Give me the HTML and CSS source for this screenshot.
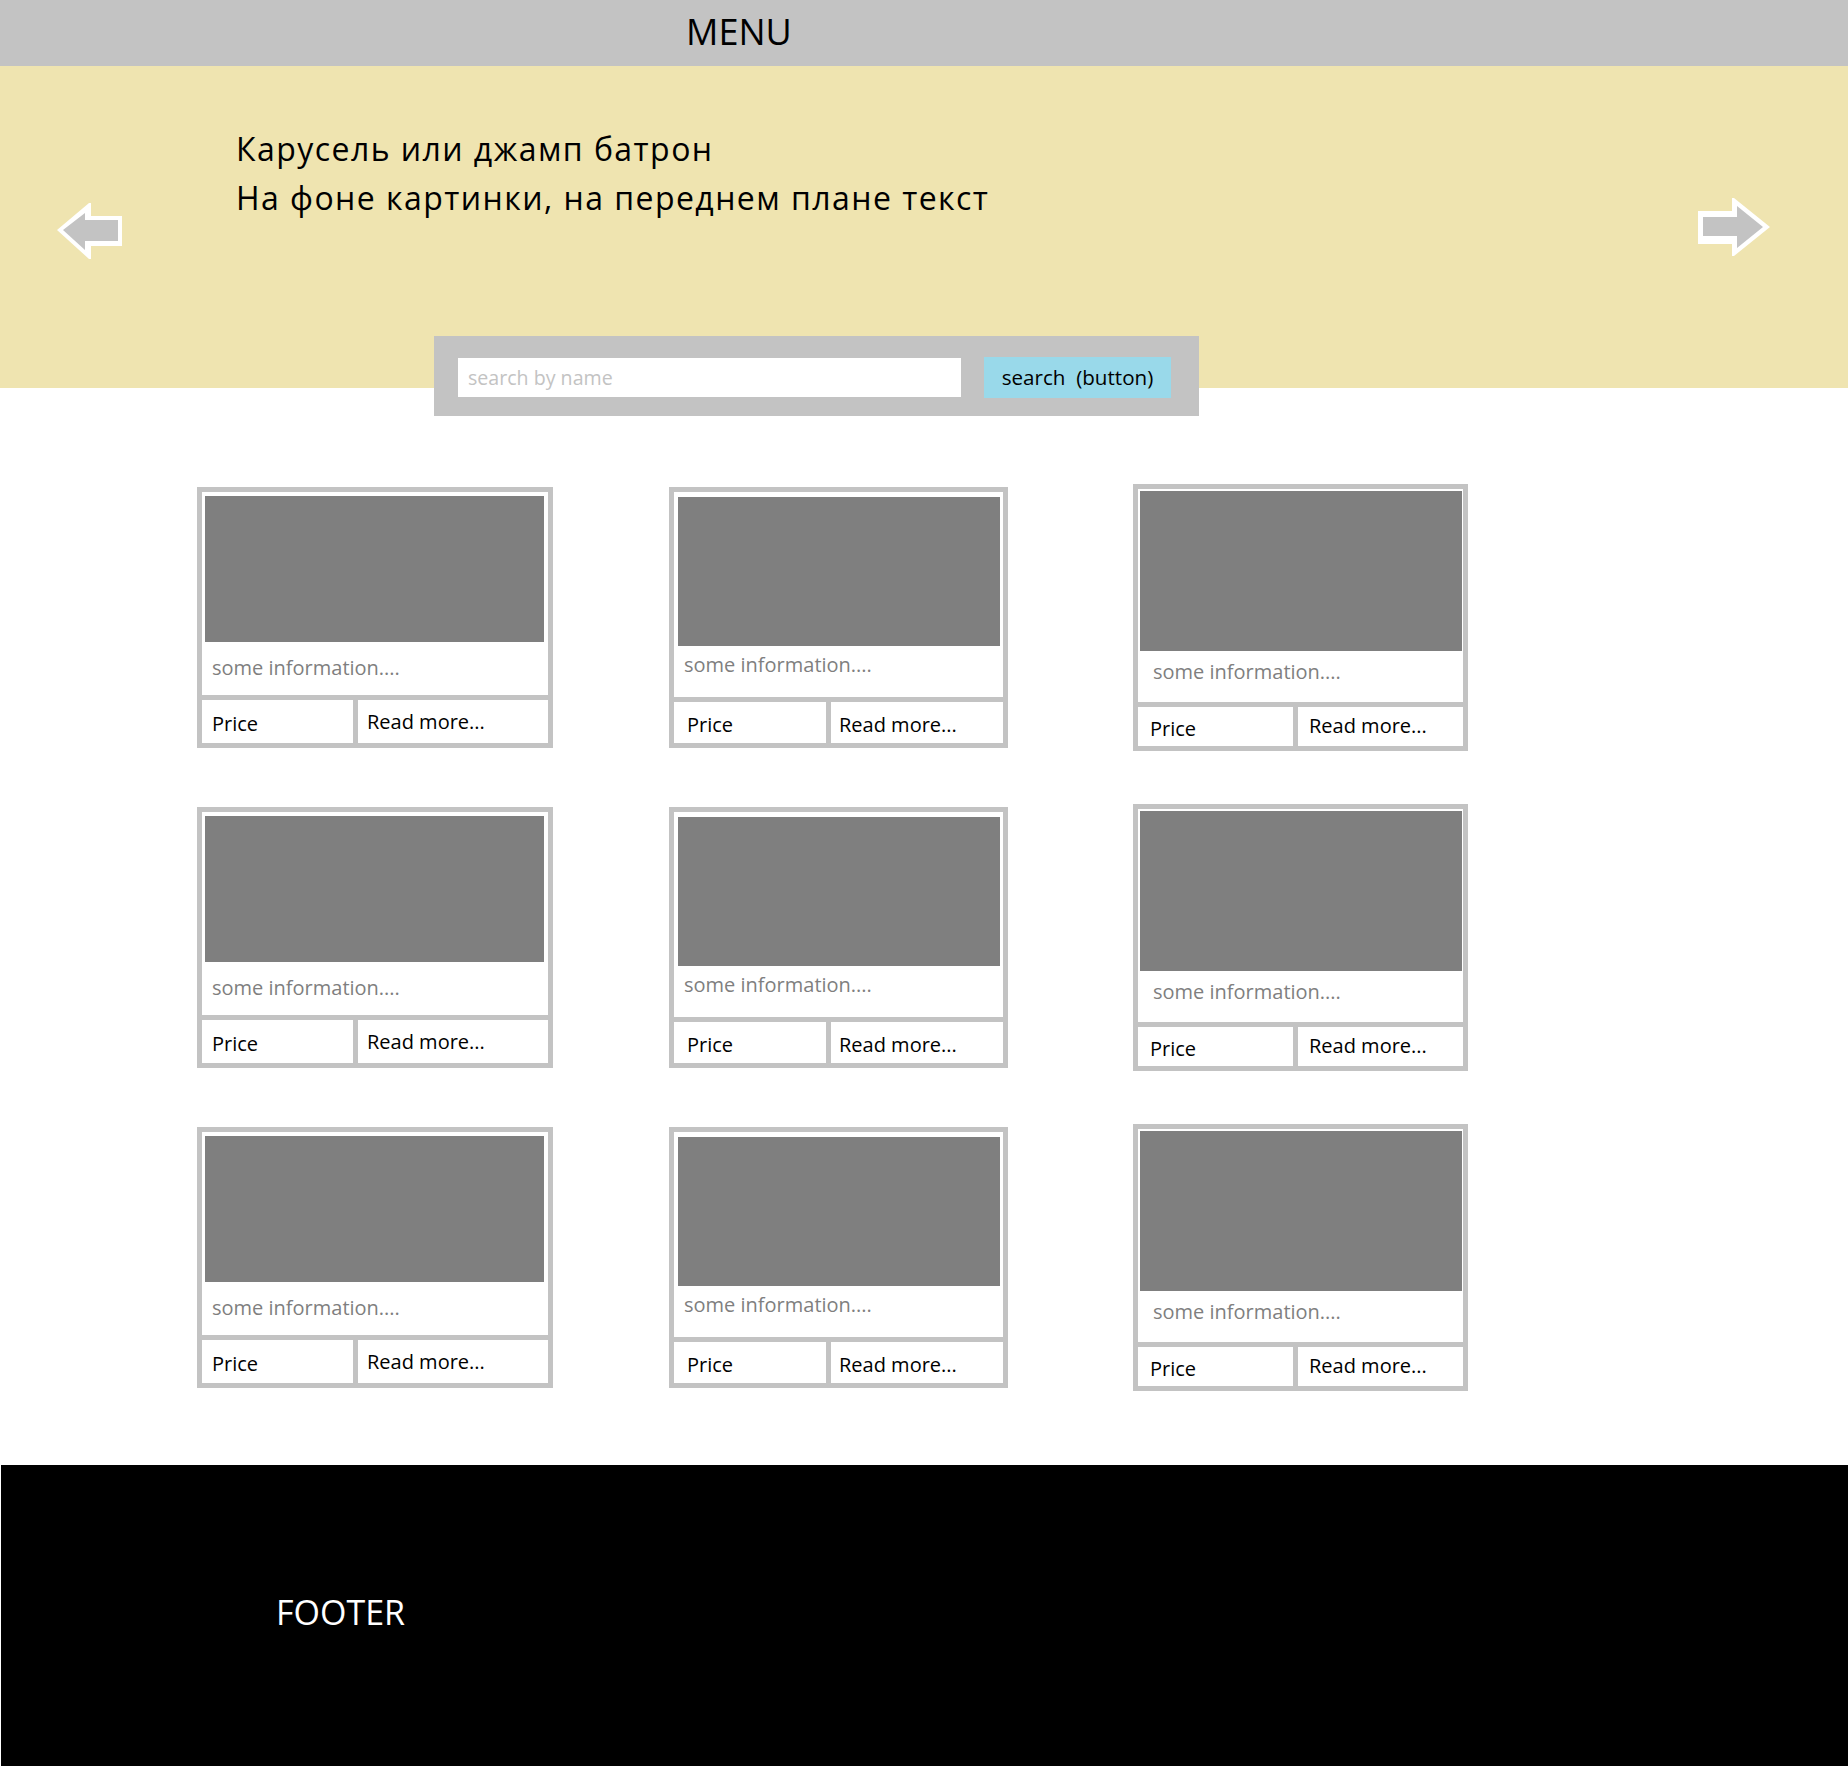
FILE: index.html
```html
<!DOCTYPE html>
<html lang="ru">
<head>
<meta charset="utf-8">
<title>Макет страницы</title>
<link rel="stylesheet" href="styles.css">
</head>
<body>
<header class="menu">MENU</header>

<section class="hero">
  <svg class="arrow arrow-left" width="66" height="57" viewBox="0 0 66 57" aria-label="previous">
    <polygon fill="#ffffff" points="0,27 32,0 34,0 34,13 65,13 65,43 34,43 34,56 32,56"/>
    <polygon fill="#c3c3c3" points="6,27 28,10 28,17 61,17 61,38 28,38 28,47"/>
  </svg>
  <div class="hero-text">
    <p>Карусель или джамп батрон</p>
    <p>На фоне картинки, на переднем плане текст</p>
  </div>
  <svg class="arrow arrow-right" width="73" height="59" viewBox="0 0 73 59" aria-label="next">
    <polygon fill="#ffffff" points="0,13 34,13 34,0 36,0 72,29 36,58 34,58 34,46 0,46"/>
    <polygon fill="#c3c3c3" points="5,19 39,19 39,8 65,29 39,50 39,38 5,38"/>
  </svg>
</section>

<form class="search">
  <input class="search-input" type="text" placeholder="search by name">
  <button class="search-btn" type="button">search&nbsp; (button)</button>
</form>

<main class="grid">
  <article class="card card-a">
    <div class="card-top"><div class="thumb"></div><p class="info">some information....</p></div>
    <div class="card-bottom"><span class="cell price">Price</span><span class="cell more">Read more...</span></div>
  </article>
  <article class="card card-b">
    <div class="card-top"><div class="thumb"></div><p class="info">some information....</p></div>
    <div class="card-bottom"><span class="cell price">Price</span><span class="cell more">Read more...</span></div>
  </article>
  <article class="card card-c">
    <div class="card-top"><div class="thumb"></div><p class="info">some information....</p></div>
    <div class="card-bottom"><span class="cell price">Price</span><span class="cell more">Read more...</span></div>
  </article>

  <article class="card card-a">
    <div class="card-top"><div class="thumb"></div><p class="info">some information....</p></div>
    <div class="card-bottom"><span class="cell price">Price</span><span class="cell more">Read more...</span></div>
  </article>
  <article class="card card-b">
    <div class="card-top"><div class="thumb"></div><p class="info">some information....</p></div>
    <div class="card-bottom"><span class="cell price">Price</span><span class="cell more">Read more...</span></div>
  </article>
  <article class="card card-c">
    <div class="card-top"><div class="thumb"></div><p class="info">some information....</p></div>
    <div class="card-bottom"><span class="cell price">Price</span><span class="cell more">Read more...</span></div>
  </article>

  <article class="card card-a">
    <div class="card-top"><div class="thumb"></div><p class="info">some information....</p></div>
    <div class="card-bottom"><span class="cell price">Price</span><span class="cell more">Read more...</span></div>
  </article>
  <article class="card card-b">
    <div class="card-top"><div class="thumb"></div><p class="info">some information....</p></div>
    <div class="card-bottom"><span class="cell price">Price</span><span class="cell more">Read more...</span></div>
  </article>
  <article class="card card-c">
    <div class="card-top"><div class="thumb"></div><p class="info">some information....</p></div>
    <div class="card-bottom"><span class="cell price">Price</span><span class="cell more">Read more...</span></div>
  </article>
</main>

<footer class="footer">FOOTER</footer>
</body>
</html>
```

FILE: styles.css
```css
html, body {
  margin: 0;
  padding: 0;
  background: #ffffff;
}

body {
  font-family: "Open Sans", "Noto Sans", "DejaVu Sans", sans-serif;
  color: #000000;
}

/* ---------- top menu ---------- */
.menu {
  height: 66px;
  box-sizing: border-box;
  padding: 1px 0 0 686px;
  background: #c3c3c3;
  font-size: 36px;
  line-height: 62px;
}

/* ---------- hero / carousel ---------- */
.hero {
  display: flex;
  align-items: flex-start;
  height: 322px;
  background: #efe4b0;
}

.arrow {
  flex: none;
  display: block;
}

.arrow-left {
  margin: 137px 0 0 57px;
}

.arrow-right {
  margin: 132px 77px 0 auto;
}

.hero-text {
  margin: 58px 0 0 113px;
  font-size: 32px;
  line-height: 49px;
  letter-spacing: 1.45px;
}

.hero-text p {
  margin: 0;
  white-space: nowrap;
}

/* ---------- search ---------- */
.search {
  display: flex;
  align-items: flex-start;
  gap: 23px;
  width: 765px;
  height: 80px;
  box-sizing: border-box;
  margin: -52px 0 0 434px;
  padding: 21px 28px 0 24px;
  background: #c3c3c3;
}

.search-input {
  width: 503px;
  height: 39px;
  margin-top: 1px;
  box-sizing: border-box;
  border: 0;
  padding: 0 0 0 10px;
  background: #ffffff;
  font-family: inherit;
  font-size: 19.6px;
  outline: none;
}

.search-input::placeholder {
  color: #c3c3c3;
  opacity: 1;
}

.search-btn {
  width: 187px;
  height: 41px;
  border: 0;
  padding: 0;
  background: #99d9ea;
  color: #000000;
  font-family: inherit;
  font-size: 20.6px;
  line-height: 41px;
  text-align: center;
}

/* ---------- product grid ---------- */
.grid {
  display: grid;
  grid-template-columns: 472px 464px 335px;
  align-items: center;
  row-gap: 53px;
  padding: 68px 0 74px 197px;
}

.card {
  display: grid;
  gap: 5px;
  width: var(--w);
  box-sizing: border-box;
  border: 5px solid #c3c3c3;
  background: #c3c3c3;
}

.card-a {
  --w: 356px; --pt: 4px; --pl: 3px; --pr: 4px; --img: 146px;
  --info-h: 53px; --info-pt: 14px; --info-pl: 7px;
  --price-w: 151px; --bot: 43px; --price-pl: 10px; --more-pl: 9px;
  --price-t: 5px; --price-b: 0px; --more-t: 1px; --more-b: 0px;
}

.card-b {
  --w: 339px; --pt: 5px; --pl: 4px; --pr: 3px; --img: 149px;
  --info-h: 51px; --info-pt: 7px; --info-pl: 6px;
  --price-w: 152px; --bot: 41px; --price-pl: 13px; --more-pl: 8px;
  --price-t: 5px; --price-b: 0px; --more-t: 5px; --more-b: 0px;
}

.card-c {
  --w: 335px; --pt: 2px; --pl: 2px; --pr: 1px; --img: 160px;
  --info-h: 51px; --info-pt: 9px; --info-pl: 13px;
  --price-w: 155px; --bot: 39px; --price-pl: 12px; --more-pl: 11px;
  --price-t: 5px; --price-b: 0px; --more-t: 0px; --more-b: 2px;
}

.card-top {
  background: #ffffff;
  padding: var(--pt) var(--pr) 0 var(--pl);
}

.thumb {
  height: var(--img);
  background: #7f7f7f;
}

.info {
  margin: 0;
  height: var(--info-h);
  box-sizing: border-box;
  padding: var(--info-pt) 0 0 var(--info-pl);
  color: #7f7f7f;
  font-size: 20px;
  line-height: 24px;
  overflow: hidden;
}

.card-bottom {
  display: grid;
  grid-template-columns: var(--price-w) 1fr;
  gap: 5px;
  height: var(--bot);
}

.cell {
  background: #ffffff;
  font-size: 20px;
}

.price {
  padding: var(--price-t) 0 var(--price-b) var(--price-pl);
  line-height: calc(var(--bot) - var(--price-t) - var(--price-b));
}

.more {
  padding: var(--more-t) 0 var(--more-b) var(--more-pl);
  line-height: calc(var(--bot) - var(--more-t) - var(--more-b));
}

/* ---------- footer ---------- */
.footer {
  height: 302px;
  box-sizing: border-box;
  margin-left: 1px;
  padding: 124px 0 0 275px;
  background: #000000;
  color: #ffffff;
  font-size: 34px;
  line-height: 46px;
}
```
